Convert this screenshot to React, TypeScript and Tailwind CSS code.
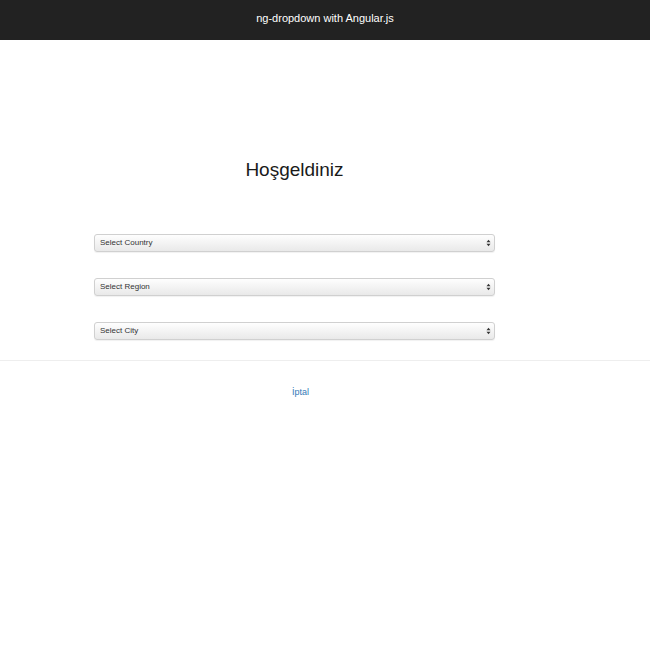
import React from "react";

const selects = ["Select Country", "Select Region", "Select City"];

function FakeSelect({ label }: { label: string }) {
  return (
    <div className="flex h-[18px] w-full items-center justify-between rounded-[3px] border border-[#d0d0d0] bg-gradient-to-b from-[#fefefe] to-[#e9e9e9] pl-[5px] pr-[3px] shadow-[0_1px_1px_rgba(0,0,0,0.06)]">
      <span className="text-[8px] font-normal leading-none text-[#333]">{label}</span>
      {/* up/down arrows */}
      <svg width="5" height="8" viewBox="0 0 5 8">
        <path d="M0.5 3.2 L2.5 0.8 L4.5 3.2 Z" fill="#333" />
        <path d="M0.5 4.8 L2.5 7.2 L4.5 4.8 Z" fill="#333" />
      </svg>
    </div>
  );
}

export default function App() {
  return (
    <div className="min-h-[650px] bg-white font-['Liberation_Sans',Arial,sans-serif]">
      {/* Top bar */}
      <div className="flex h-[40px] items-center justify-center bg-[#222222] pb-[4px]">
        <span className="text-[11px] text-white">ng-dropdown with Angular.js</span>
      </div>

      {/* Form */}
      <div className="ml-[94px] w-[401px] pt-[118px]">
        <h1 className="text-center text-[19px] leading-[24px] text-[#1a1a1a]">Hoşgeldiniz</h1>
        <div className="mt-[52px] flex flex-col gap-[26px]">
          {selects.map((s) => (
            <FakeSelect key={s} label={s} />
          ))}
        </div>
      </div>

      <div className="mt-[20px] border-t border-[#eeeeee]" />

      <div className="pl-[292px] pt-[17px]">
        <a href="#" className="text-[9px] text-[#337ab7]">
          İptal
        </a>
      </div>
    </div>
  );
}
